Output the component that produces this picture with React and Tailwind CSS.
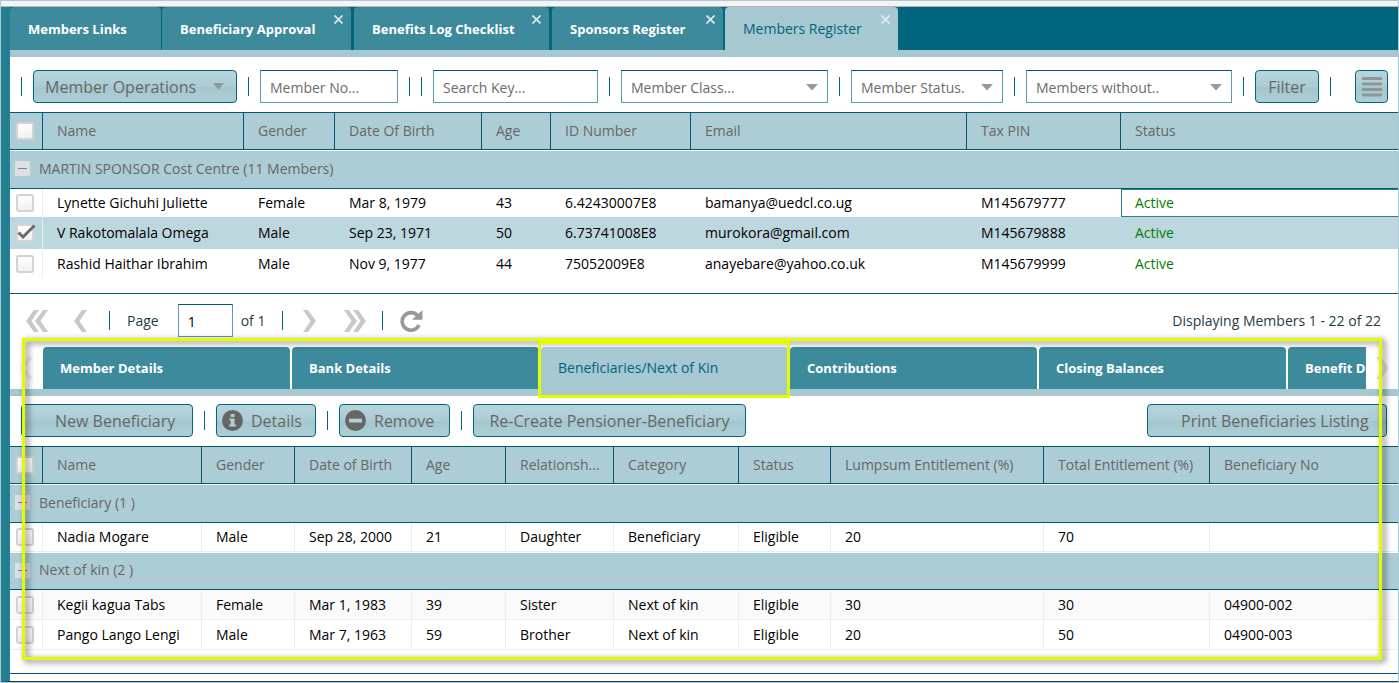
import React, { useState } from 'react';

const topTabs = [
  { label: 'Members Links', width: 'w-[151px] mr-px' },
  { label: 'Beneficiary Approval', width: 'w-[189px] mr-[3px]', closable: true },
  { label: 'Benefits Log Checklist', width: 'w-[195px] mr-[3px]', closable: true },
  { label: 'Sponsors Register', width: 'w-[171px] mr-[2px]', closable: true },
  { label: 'Members Register', width: 'w-[173px]', closable: true },
];

const detailTabs = [
  'Member Details',
  'Bank Details',
  'Beneficiaries/Next of Kin',
  'Contributions',
  'Closing Balances',
  'Benefit Details',
];

const memberColumns = [
  { label: 'Name', width: 'w-[201px]' },
  { label: 'Gender', width: 'w-[91px]' },
  { label: 'Date Of Birth', width: 'w-[147px]' },
  { label: 'Age', width: 'w-[69px]' },
  { label: 'ID Number', width: 'w-[140px]' },
  { label: 'Email', width: 'w-[276px]' },
  { label: 'Tax PIN', width: 'w-[154px]' },
  { label: 'Status', width: '' },
];

const members = [
  ['Lynette Gichuhi Juliette', 'Female', 'Mar 8, 1979', '43', '6.42430007E8', 'bamanya@uedcl.co.ug', 'M145679777'],
  ['V Rakotomalala Omega', 'Male', 'Sep 23, 1971', '50', '6.73741008E8', 'murokora@gmail.com', 'M145679888'],
  ['Rashid Haithar Ibrahim', 'Male', 'Nov 9, 1977', '44', '75052009E8', 'anayebare@yahoo.co.uk', 'M145679999'],
];

const beneficiaryColumns = [
  { label: 'Name', width: 'w-[159px]' },
  { label: 'Gender', width: 'w-[93px]' },
  { label: 'Date of Birth', width: 'w-[117px]' },
  { label: 'Age', width: 'w-[94px]' },
  { label: 'Relationsh...', width: 'w-[108px]' },
  { label: 'Category', width: 'w-[125px]' },
  { label: 'Status', width: 'w-[92px]' },
  { label: 'Lumpsum Entitlement (%)', width: 'w-[213px]' },
  { label: 'Total Entitlement (%)', width: 'w-[166px]' },
  { label: 'Beneficiary No', width: '' },
];

const beneficiaryGroups = [
  {
    title: 'Beneficiary (1 )',
    height: 'h-[39px]',
    rowHeight: 'h-[29px]',
    rows: [['Nadia Mogare', 'Male', 'Sep 28, 2000', '21', 'Daughter', 'Beneficiary', 'Eligible', '20', '70', '']],
  },
  {
    title: 'Next of kin (2 )',
    height: 'h-[38px]',
    rowHeight: 'h-[30px]',
    rows: [
      ['Kegii kagua Tabs', 'Female', 'Mar 1, 1983', '39', 'Sister', 'Next of kin', 'Eligible', '30', '30', '04900-002'],
      ['Pango Lango Lengi', 'Male', 'Mar 7, 1963', '59', 'Brother', 'Next of kin', 'Eligible', '20', '50', '04900-003'],
    ],
  },
];

const Separator = () => <span className="h-[19px] w-px shrink-0 bg-[#00667d]" />;

const ToolButton = ({ className, children, ...props }) => (
  <button
    {...props}
    className={`flex h-[33px] shrink-0 items-center rounded-[4px] border border-[#00667d] bg-[linear-gradient(#b6d4dc,#accdd5_50%,#a3c6cf_52%,#add0d7)] text-[16px] font-medium whitespace-nowrap text-[#666] ${className}`}
  >
    {children}
  </button>
);

const fieldBorder = 'border border-[#5c9ba9] border-t-[#005a6e]';

const SelectBox = ({ label, width }) => (
  <div className={`relative shrink-0 ${width}`}>
    <select
      aria-label={label}
      className={`h-[33px] w-full appearance-none bg-white pt-[2px] pl-[9px] text-[14px] text-[#6c6c6c] outline-none ${fieldBorder}`}
    >
      <option>{label}</option>
    </select>
    <svg className="pointer-events-none absolute top-[14px] right-[10px]" width="12" height="7" viewBox="0 0 12 7">
      <path d="M0 0h12L6 6.5z" fill="#999" />
    </svg>
  </div>
);

const CheckBox = ({ label, checked = false }) => {
  const [on, setOn] = useState(checked);
  return (
    <span className="relative ml-[6px] block size-[18px]">
      <input
        type="checkbox"
        aria-label={label}
        checked={on}
        onChange={() => setOn(!on)}
        className="block size-[18px] appearance-none rounded-[3px] border-2 border-[#d3d3d3] bg-[linear-gradient(#ffffff,#f1f1f1)]"
      />
      {on && (
        <svg className="pointer-events-none absolute top-0 left-px" width="20" height="16" viewBox="0 0 20 16">
          <path d="M1.5 8.5 L6 13 L17.5 1.5" fill="none" stroke="#6b6b6b" strokeWidth="3" />
        </svg>
      )}
    </span>
  );
};

const HeaderRow = ({ columns }) => (
  <tr className="h-[38px] bg-[#adcdd6] text-left text-[#666]">
    <th className="w-[33px] border-y border-r border-[#005a6e] p-0">
      <CheckBox label="Select all" />
    </th>
    {columns.map((col, i) => (
      <th
        key={col.label}
        className={`border-y border-[#005a6e] p-0 pl-[14px] font-normal whitespace-nowrap ${col.width} ${
          i < columns.length - 1 ? 'border-r' : ''
        }`}
      >
        {col.label}
      </th>
    ))}
  </tr>
);

const GroupRow = ({ title, span, height }) => (
  <tr className={`bg-[#adcdd6] text-[#666] ${height}`}>
    <td colSpan={span} className="border-t border-b border-t-white border-b-[#005a6e] p-0 pb-[2px]">
      <div className="flex items-center gap-[9px] pl-[5px]">
        <button
          aria-label={`Collapse ${title}`}
          className="flex size-[15px] items-center justify-center bg-[#dcdfe5]"
        >
          <span className="h-px w-[9px] bg-[#808080]" />
        </button>
        {title}
      </div>
    </td>
  </tr>
);

const Chevron = ({ flip, double, label }) => (
  <button aria-label={label} className="shrink-0">
    <svg
      className={flip ? 'rotate-180' : ''}
      width={double ? 22 : 13}
      height="22"
      viewBox={double ? '0 0 22 22' : '0 0 13 22'}
    >
      <path d="M8 0h5L5.5 11 13 22H8L0 11z" fill="#c9c9c9" />
      {double && <path d="M17 0h5L14.5 11 22 22h-5L9 11z" fill="#c9c9c9" />}
    </svg>
  </button>
);

const TopTabs = () => (
  <nav className="flex h-[43px] bg-[#00667d]">
    {topTabs.map((tab, i) => {
      const active = i === topTabs.length - 1;
      return (
        <div
          key={tab.label}
          className={`relative shrink-0 rounded-t-[4px] ${tab.width} ${
            active ? 'bg-[#a6c9d1] text-[#00637b]' : 'bg-[#3d8a9d] text-[13px] font-bold text-white'
          }`}
        >
          <button className="h-full w-full pl-[18px] text-left whitespace-nowrap">{tab.label}</button>
          {tab.closable && (
            <button aria-label={`Close ${tab.label}`} className="absolute top-2 right-[8px]">
              <svg width="9" height="9" viewBox="0 0 9 9">
                <path d="M.5 .5l8 8M8.5 .5l-8 8" stroke="#dcebef" strokeWidth="1.7" />
              </svg>
            </button>
          )}
        </div>
      );
    })}
  </nav>
);

const MembersToolbar = () => (
  <div className="flex items-center gap-[11px] pt-[13px] pr-[10px] pb-[9px] pl-[11px]">
    <Separator />
    <ToolButton className="w-[204px] justify-between pr-3 pl-[11px]">
      Member Operations
      <svg width="11" height="7" viewBox="0 0 11 7">
        <path d="M0 0h11L5.5 7z" fill="#8f9a9d" />
      </svg>
    </ToolButton>
    <Separator />
    <input
      aria-label="Member No"
      placeholder="Member No..."
      className={`h-[33px] w-[138px] shrink-0 px-[9px] pt-[2px] placeholder:text-[#6c6c6c] ${fieldBorder}`}
    />
    <Separator />
    <Separator />
    <input
      aria-label="Search Key"
      placeholder="Search Key..."
      className={`h-[33px] w-[165px] shrink-0 px-[9px] pt-[2px] placeholder:text-[#6c6c6c] ${fieldBorder}`}
    />
    <Separator />
    <SelectBox label="Member Class..." width="w-[207px]" />
    <Separator />
    <SelectBox label="Member Status." width="w-[152px]" />
    <Separator />
    <SelectBox label="Members without.." width="w-[206px]" />
    <Separator />
    <ToolButton className="w-16 justify-center">Filter</ToolButton>
    <Separator />
    <ToolButton aria-label="Menu" className="ml-auto w-[33px] justify-center">
      <svg width="20" height="20" viewBox="0 0 20 20">
        <path d="M0 1.5h20M0 7h20M0 12.5h20M0 18h20" stroke="#8e9698" strokeWidth="3" />
      </svg>
    </ToolButton>
  </div>
);

const MembersTable = () => (
  <table className="w-full table-fixed border-separate border-spacing-0">
    <thead>
      <HeaderRow columns={memberColumns} />
    </thead>
    <tbody>
      <GroupRow title="MARTIN SPONSOR Cost Centre (11 Members)" span={9} height="h-[39px]" />
      {members.map((row, i) => (
        <tr key={row[0]} className={i === 1 ? 'h-8 bg-[#bdd7de]' : i === 0 ? 'h-7' : 'h-[29px]'}>
          <td className="border-r border-[#ededed] p-0">
            <CheckBox label={row[0]} checked={i === 1} />
          </td>
          {row.map((value) => (
            <td key={value} className="p-0 pl-[14px] whitespace-nowrap">
              {value}
            </td>
          ))}
          <td className={`p-0 text-[#008000] ${i === 0 ? 'border border-r-0 border-[#2b7f93] pl-[13px]' : 'pl-[14px]'}`}>
            Active
          </td>
        </tr>
      ))}
    </tbody>
  </table>
);

const Pager = () => (
  <div className="flex items-center border-t border-[#005a6e] pt-[10px] pr-[17px] pb-px pl-4 text-[#1f3b45]">
    <Chevron double label="First page" />
    <span className="ml-[26px] flex">
      <Chevron label="Previous page" />
    </span>
    <span className="mr-[17px] ml-[22px] flex">
      <Separator />
    </span>
    <label htmlFor="page">Page</label>
    <input
      id="page"
      defaultValue="1"
      className={`ml-[19px] h-[33px] w-[55px] px-[9px] pt-[2px] text-black ${fieldBorder}`}
    />
    <span className="ml-2">of 1</span>
    <span className="mr-5 ml-[17px] flex">
      <Separator />
    </span>
    <Chevron flip label="Next page" />
    <span className="ml-7 flex">
      <Chevron flip double label="Last page" />
    </span>
    <span className="mr-[17px] ml-4 flex">
      <Separator />
    </span>
    <button aria-label="Refresh">
      <svg width="23" height="22" viewBox="0 0 23 22">
        <path d="M17.5 5.5A8.8 8.8 0 1 0 19 15" fill="none" stroke="#999" strokeWidth="3.6" />
        <path d="M22.5 0v9.8H12z" fill="#999" />
      </svg>
    </button>
    <span className="ml-auto">Displaying Members 1 - 22 of 22</span>
  </div>
);

const DetailTabs = () => (
  <>
    <nav className="flex h-[42px] items-stretch">
      <div className="flex w-[33px] shrink-0 items-center pl-[10px] opacity-30">
        <Chevron label="Scroll tabs left" />
      </div>
      <div className="flex min-w-0 flex-1 gap-[2px] overflow-x-clip">
        {detailTabs.map((label) => {
          const active = label === 'Beneficiaries/Next of Kin';
          return (
            <button
              key={label}
              className={`relative w-[247px] shrink-0 rounded-t-[4px] pl-[17px] text-left ${
                active ? 'z-30 bg-[#a6c9d1] text-[#00637b]' : 'bg-[#3d8a9d] text-[13px] font-bold text-white'
              }`}
            >
              {label}
              {active && (
                <span className="pointer-events-none absolute -top-[6px] -right-[2px] -bottom-[9px] -left-[3px] border-[3px] border-[#e3fa00]" />
              )}
            </button>
          );
        })}
      </div>
      <div className="flex w-8 shrink-0 items-center pl-[10px] opacity-50">
        <Chevron flip label="Scroll tabs right" />
      </div>
    </nav>
    <div className="h-[7px] bg-[#a6c9d1]" />
  </>
);

const BeneficiaryToolbar = () => (
  <div className="flex items-center gap-[11px] pt-2 pr-[11px] pb-[9px] pl-[11px]">
    <ToolButton className="w-[172px] pl-[33px]">New Beneficiary</ToolButton>
    <Separator />
    <ToolButton className="w-[100px] gap-2 pl-[5px]">
      <svg width="21" height="21" viewBox="0 0 21 21">
        <circle cx="10.5" cy="10.5" r="10.5" fill="#666" />
        <path d="M8.7 4h3.8v3H8.700zM7.5 8.5h5v6h1.3v2H7.300v-2h1.400v-4H7.500z" fill="#b3d0d8" />
      </svg>
      Details
    </ToolButton>
    <Separator />
    <ToolButton className="w-[111px] gap-2 pl-[5px]">
      <svg width="21" height="21" viewBox="0 0 21 21">
        <circle cx="10.5" cy="10.5" r="10.5" fill="#666" />
        <path d="M4 8.7h13v3.8H4z" fill="#b3d0d8" />
      </svg>
      Remove
    </ToolButton>
    <Separator />
    <ToolButton className="w-[273px] justify-center">Re-Create Pensioner-Beneficiary</ToolButton>
    <ToolButton className="ml-auto w-[240px] pl-[33px]">Print Beneficiaries Listing</ToolButton>
  </div>
);

const BeneficiaryTable = () => (
  <table className="w-full table-fixed border-separate border-spacing-0">
    <thead>
      <HeaderRow columns={beneficiaryColumns} />
    </thead>
    {beneficiaryGroups.map((group) => (
      <tbody key={group.title}>
        <GroupRow title={group.title} span={11} height={group.height} />
        {group.rows.map((row, i) => (
          <tr key={row[0]} className={`${group.rowHeight} ${group.rows.length > 1 && i === 0 ? 'bg-[#fafafa]' : 'bg-white'}`}>
            <td className="border-r border-b border-[#ededed] p-0">
              <CheckBox label={row[0]} />
            </td>
            {row.map((value, j) => (
              <td
                key={j}
                className={`border-b border-[#ededed] p-0 pl-[14px] whitespace-nowrap ${j < row.length - 1 ? 'border-r' : ''}`}
              >
                {value}
              </td>
            ))}
          </tr>
        ))}
      </tbody>
    ))}
  </table>
);

const App = () => {
  return (
    <div className="border border-[#a9cbd4] bg-white font-['Open_Sans','Noto_Sans',sans-serif] text-[14px] leading-5 text-black">
      <div className="h-[6px] border-b border-[#b5b5b5] bg-[#f5f3f4]" />
      <main className="border-b border-l-[9px] border-b-[#1f3b45] border-l-[#257f93]">
        <TopTabs />
        <div className="h-[7px] bg-[#a6c9d1]" />
        <MembersToolbar />
        <div className="pb-[15px]">
          <MembersTable />
        </div>
        <Pager />
        <section className="relative pt-[9px]">
          <DetailTabs />
          <BeneficiaryToolbar />
          <BeneficiaryTable />
          {/* highlight frame around the beneficiaries panel */}
          <div className="pointer-events-none absolute top-0 right-4 -bottom-[10px] left-3 z-20 border-[3px] border-[#e3fa00] drop-shadow-[3px_2px_3px_rgba(0,0,0,0.6)]" />
        </section>
        <div className="mt-[23px] h-2 border-t border-[#005a6e]" />
      </main>
    </div>
  );
};

export default App;
